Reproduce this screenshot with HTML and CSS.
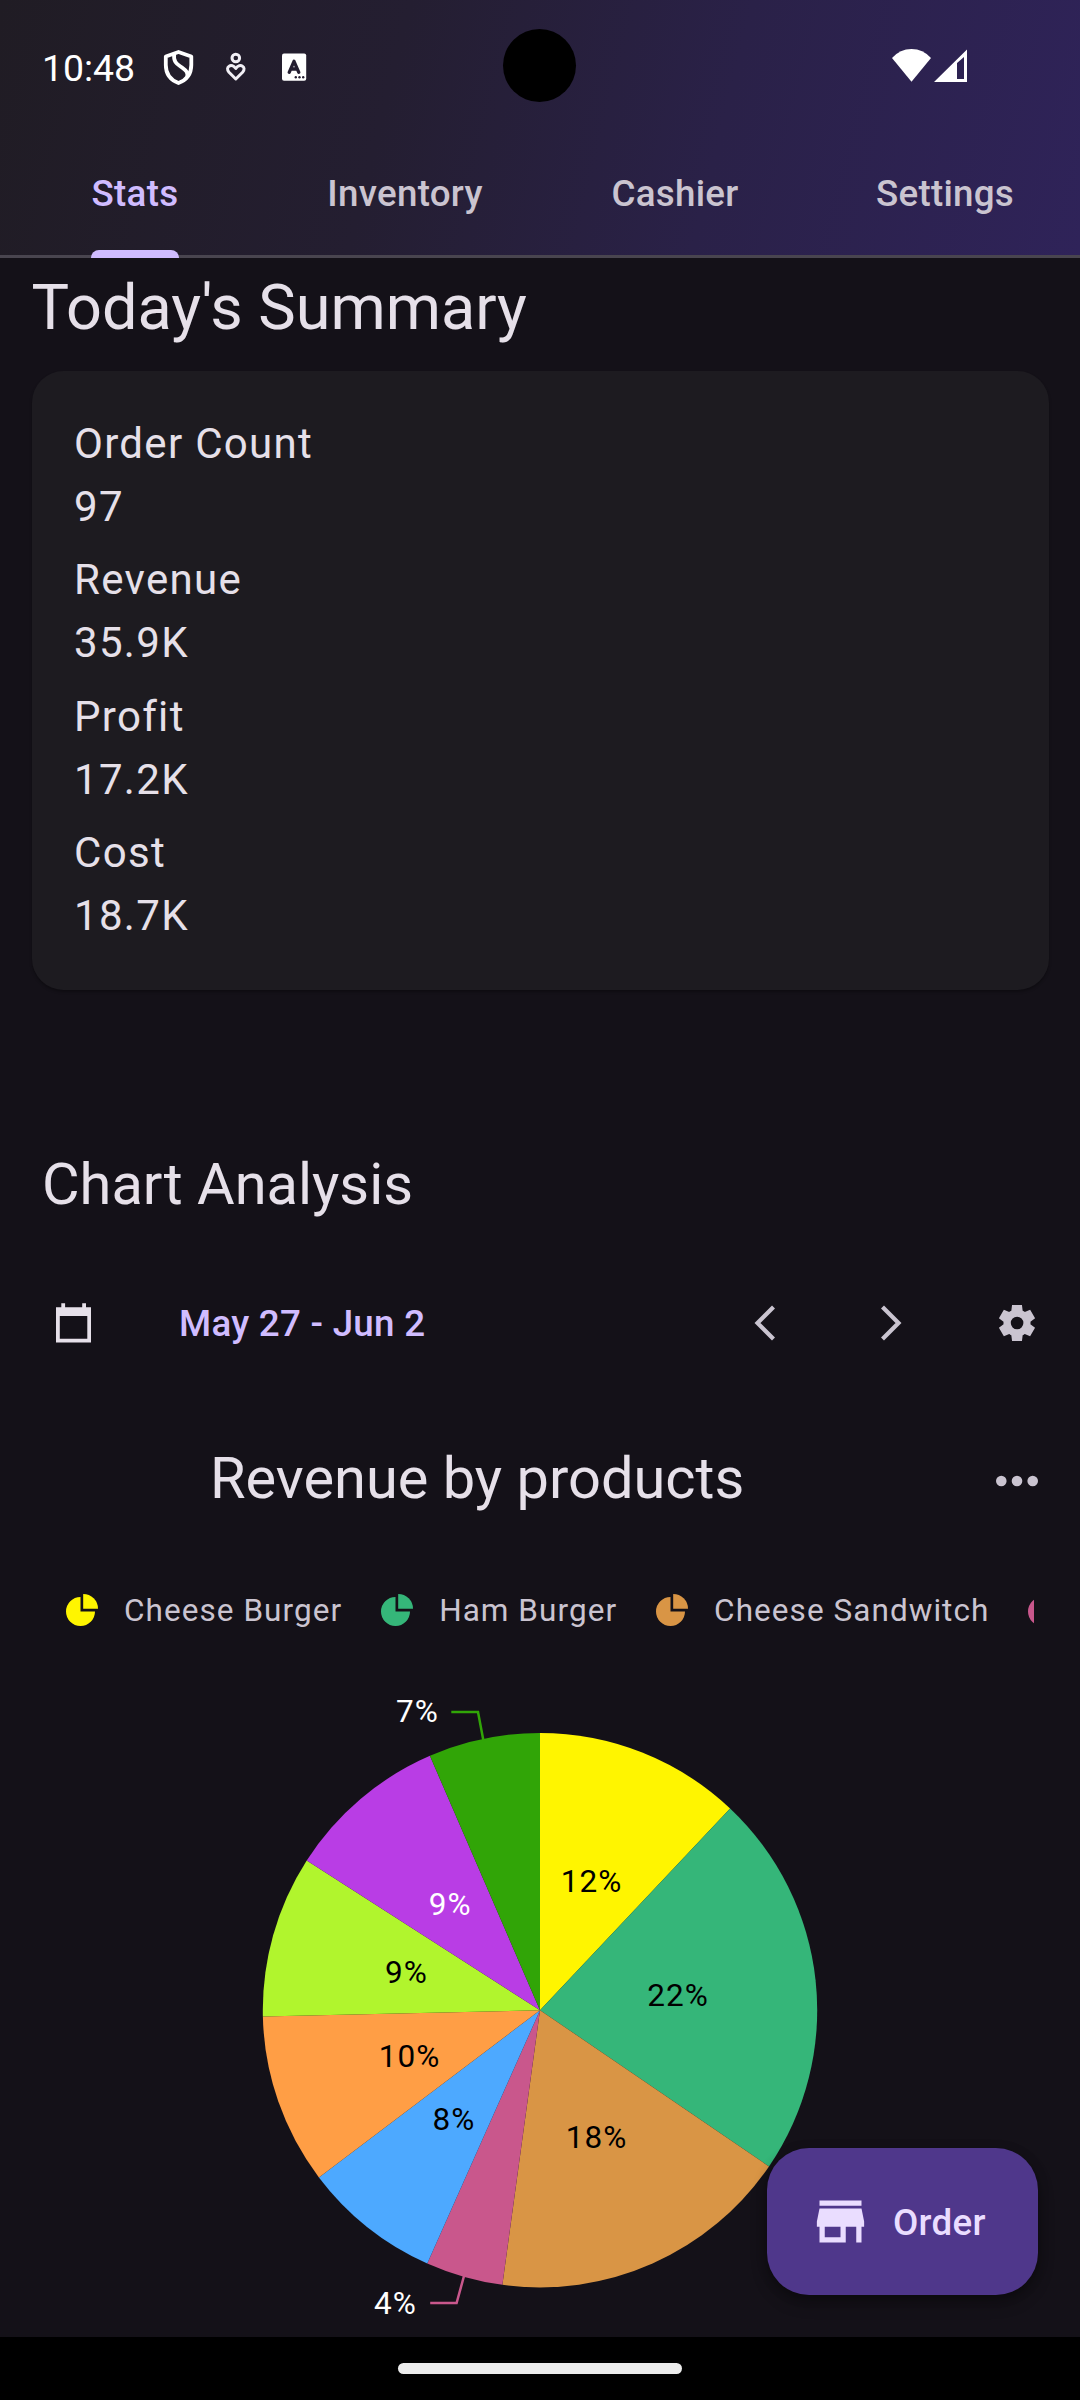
FILE: index.html
```html
<!DOCTYPE html>
<html lang="en">
<head>
<meta charset="utf-8">
<title>Stats</title>
<link rel="stylesheet" href="styles.css">
</head>
<body>
<div class="screen">
  <header class="top">
    <div class="status">
      <span class="clock">10:48</span>
      <svg class="status-left" width="160" height="60" viewBox="155 38 160 60">
        <g fill="none" stroke="#fff" stroke-width="3.800" stroke-linejoin="round">
          <path d="M178.500 52L191.300 56.500V65C191.300 73.500 186.500 80 178.500 83C170.500 80 165.800 73.500 165.800 65V56.500Z"/>
          <path d="M174.200 53.500C173 63 178 64.500 182 67.500S188 72 187.300 77"/>
        </g>
        <g fill="none" stroke="#f1eff5" stroke-width="3" stroke-linejoin="round">
          <circle cx="235.800" cy="58" r="3.800"/>
          <path d="M235.800 79L229 72.300C224.500 67 231.500 62.500 235.800 68.500C240.100 62.500 247.100 67 242.600 72.300Z"/>
        </g>
        <rect x="282" y="53.500" width="24.200" height="27.200" rx="2" fill="#fff"/>
        <path d="M289.200 72.300L294 61.300L298.800 72.300M291 69H297" fill="none" stroke="#241e31" stroke-width="3.300" stroke-linecap="round" stroke-linejoin="round"/>
        <g fill="#241e31"><circle cx="295.800" cy="77.300" r="1.200"/><circle cx="299.500" cy="77.300" r="1.200"/><circle cx="303.200" cy="77.300" r="1.200"/></g>
      </svg>
      <svg class="status-right" width="80" height="40" viewBox="890 45 80 40">
        <path fill="#fff" d="M892 58Q900 49 911.500 49T931 58L911.500 81.700Z"/>
        <path fill="#fff" fill-rule="evenodd" d="M934 82L967 49.500V82ZM957 63V79H964V57Z"/>
      </svg>
      <span class="camera"></span>
    </div>
    <nav class="tabs">
      <a class="tab active">Stats</a>
      <a class="tab">Inventory</a>
      <a class="tab">Cashier</a>
      <a class="tab">Settings</a>
    </nav>
  </header>

  <main>
    <h1>Today's Summary</h1>
    <section class="card">
      <div><p>Order Count</p><p>97</p></div>
      <div><p>Revenue</p><p>35.9K</p></div>
      <div><p>Profit</p><p>17.2K</p></div>
      <div><p>Cost</p><p>18.7K</p></div>
    </section>

    <h2>Chart Analysis</h2>
    <div class="range">
      <svg class="calendar" width="35" height="40" viewBox="56 1303 35 40"><path fill="#e6e0e9" fill-rule="evenodd" d="M56 1307.200H61.300V1303.200H65.100V1307.200H82.200V1303.200H86V1307.200H91V1342.400H56ZM59.800 1316V1338.700H87.300V1316Z"/></svg>
      <span class="dates">May 27 - Jun 2</span>
      <svg width="284" height="42" viewBox="754 1302 284 42">
        <path d="M773.500 1307L757.500 1323L773.500 1339M882.500 1307L898.500 1323L882.500 1339" fill="none" stroke="#cac4d0" stroke-width="4.200"/>
        <path transform="translate(995.400 1301.400) scale(1.8)" fill="#cac4d0" fill-rule="evenodd" d="M9.250 22l-.4-3.200q-.325-.125-.612-.3-.288-.175-.563-.375L4.700 19.375l-2.750-4.750 2.575-1.950q-.025-.175-.025-.337v-.675q0-.163.025-.338L1.950 9.375l2.750-4.750 2.975 1.250q.275-.2.575-.375.3-.175.600-.3l.4-3.200h5.500l.4 3.200q.325.125.613.300.287.175.562.375l2.975-1.250 2.750 4.750-2.575 1.950q.025.175.025.338v.674q0 .163-.05.338l2.575 1.950-2.750 4.750-2.950-1.250q-.275.200-.575.375-.3.175-.6.300l-.4 3.200zm2.800-6.500q1.450 0 2.475-1.025Q15.550 13.450 15.550 12q0-1.450-1.025-2.475Q13.500 8.500 12.050 8.500q-1.475 0-2.488 1.025Q8.550 10.550 8.550 12q0 1.450 1.012 2.475Q10.575 15.500 12.050 15.500z"/>
      </svg>
    </div>

    <div class="chart-head">
      <h2>Revenue by products</h2>
      <svg width="42" height="12" viewBox="0 0 42 12" fill="#cac4d0"><circle cx="5.300" cy="6" r="5.300"/><circle cx="21" cy="6" r="5.300"/><circle cx="36.700" cy="6" r="5.300"/></svg>
    </div>

    <svg class="defs" width="0" height="0"><symbol id="pie" viewBox="0 0 32 32"><path d="M14.500 3A14.500 14.500 0 1 0 29 17.500H14.500Z"/><path d="M17.200 0A14.800 14.800 0 0 1 32 14.800H17.200Z"/></symbol></svg>
    <div class="legend">
      <div class="key yellow"><svg><use href="#pie"/></svg><span>Cheese Burger</span></div>
      <div class="key green"><svg><use href="#pie"/></svg><span>Ham Burger</span></div>
      <div class="key tan"><svg><use href="#pie"/></svg><span>Cheese Sandwitch</span></div>
      <div class="key pink"><svg><use href="#pie"/></svg></div>
    </div>

    <svg class="chart" width="1080" height="680" viewBox="0 1657 1080 680">
      <g id="slices"></g>
      <path d="M451.300 1712H478L483.300 1740" fill="none" stroke="#31a507" stroke-width="2.500"/>
      <path d="M430.200 2303H456.600L464 2276" fill="none" stroke="#c9578c" stroke-width="2.500"/>
      <g class="labels">
        <text x="591.500" y="1892">12%</text>
        <text x="678" y="2006">22%</text>
        <text x="596.500" y="2148">18%</text>
        <text x="454" y="2130">8%</text>
        <text x="409.500" y="2067">10%</text>
        <text x="406.500" y="1983">9%</text>
        <text class="light" x="450.200" y="1915">9%</text>
        <text class="light" x="417.500" y="1722">7%</text>
        <text class="light" x="395.500" y="2314">4%</text>
      </g>
    </svg>
  </main>

  <button class="order">
    <svg width="63" height="63" viewBox="0 0 24 24"><path fill="#eaddff" d="M20 4H4v2h16V4zm1 10v-2l-1-5H4l-1 5v2h1v6h10v-6h4v6h2v-6h1zm-9 4H6v-4h6v4z"/></svg>
    <span>Order</span>
  </button>
  <footer><span class="pill"></span></footer>
</div>
<script src="chart.js"></script>
</body>
</html>
```
FILE: styles.css
```css
* { box-sizing: border-box; margin: 0; padding: 0; }
body { width: 1080px; height: 2400px; overflow: hidden; background: #141118; font-family: Roboto, sans-serif; color: #e6e0e9; }
svg { display: block; flex: none; }
.screen { position: relative; display: flex; flex-direction: column; width: 1080px; height: 2400px; }
.top { height: 258px; flex: none; background: linear-gradient(104deg, #201c24 0%, #241e31 36%, #2a2148 66%, #2f2359 100%); border-bottom: 3px solid #49454f; display: flex; flex-direction: column; }
.status { position: relative; flex: none; height: 132px; display: flex; align-items: flex-start; }
.clock { margin: 46px 0 0 42px; width: 113px; font-size: 37.400px; line-height: 45px; color: #fff; }
.status-left { margin-top: 38px; }
.status-right { margin: 45px 0 0 575px; }
.camera { position: absolute; left: 503px; top: 29px; width: 73px; height: 73px; border-radius: 50%; background: #000; }
.tabs { display: grid; grid-template-columns: repeat(4, 1fr); height: 123px; }
.tab { position: relative; display: flex; justify-content: center; padding-top: 36px; font-size: 36.750px; font-weight: 500; letter-spacing: .26px; line-height: 52px; color: #cac4d0; }
.active { color: #d0bcff; }
.active::after { content: ""; position: absolute; left: 91px; top: 118px; width: 88px; height: 8px; border-radius: 8px 8px 0 0; background: #d0bcff; }
main { height: 2079px; display: flex; flex-direction: column; }
h1 { margin: 8px 0 0 31.500px; font-size: 63px; font-weight: 400; line-height: 84px; }
.card { margin: 21px 31.500px 0; height: 619px; padding: 40.500px 42.500px; border-radius: 31.500px; background: #1d1b20; box-shadow: 0 2px 3px rgba(0,0,0,.3); display: flex; flex-direction: column; gap: 10.500px; font-size: 42px; letter-spacing: 1.310px; line-height: 63px; }
h2 { font-size: 57.750px; font-weight: 400; line-height: 74px; }
main > h2 { margin: 156.500px 0 0 42px; }
.range { display: flex; align-items: center; height: 126px; margin: 39.500px 42px 0 56px; }
.dates { flex: 1; padding-left: 88px; font-size: 36.750px; font-weight: 500; letter-spacing: .26px; color: #d0bcff; }
.chart-head { display: flex; justify-content: space-between; align-items: center; height: 74px; margin: 57.500px 42px 0 210px; }
.chart-head h2 { margin-bottom: 5px; }
.defs { position: absolute; }
.legend { display: flex; align-items: center; height: 48px; margin: 68.500px 46.500px 0 66px; overflow: hidden; font-size: 31.500px; letter-spacing: 1.050px; line-height: 46px; color: #cac4d0; white-space: nowrap; }
.key { display: flex; align-items: center; flex: none; margin-right: 39px; }
.key span { padding-top: 2px; }
.key svg { width: 32px; height: 32px; margin-right: 26px; }
.yellow svg { fill: #fff500; } .green svg { fill: #35b679; } .tan svg { fill: #d99545; } .pink svg { fill: #c9578c; }
.chart { margin-top: 23px; }
.labels { font-size: 31.500px; letter-spacing: 1.050px; text-anchor: middle; fill: #000; }
.labels .light { fill: #fff; }
.order { position: absolute; left: 767px; top: 2148px; width: 271px; height: 147px; border: 0; border-radius: 42px; background: #4f378b; box-shadow: 0 8px 16px rgba(0,0,0,.3), 0 2px 12px rgba(0,0,0,.2); display: flex; align-items: center; padding-left: 42px; gap: 21px; font: 500 36.750px/52px Roboto, sans-serif; letter-spacing: .26px; color: #eaddff; }
.order span { padding-top: 2px; }
footer { height: 63px; flex: none; background: #000; display: flex; justify-content: center; align-items: center; }
.pill { width: 284px; height: 10.500px; border-radius: 6px; background: #ececec; }
```
FILE: chart.js
```javascript
// Each slice: start angle, end angle (clockwise from the top), colour.
const slices = [
  [0, 43.3, '#fff500'],
  [43.3, 124.3, '#35b679'],
  [124.3, 187.8, '#d99545'],
  [187.8, 204, '#c9578c'],
  [204, 232.9, '#4da9ff'],
  [232.9, 268.7, '#ff9e45'],
  [268.7, 302.7, '#b1f52d'],
  [302.7, 336.6, '#b93de5'],
  [336.6, 360, '#31a507'],
];
const cx = 540, cy = 2010.2, r = 277.2;
const point = (deg) => {
  const a = deg * Math.PI / 180;
  return `${(cx + r * Math.sin(a)).toFixed(2)} ${(cy - r * Math.cos(a)).toFixed(2)}`;
};
const group = document.getElementById('slices');
for (const [from, to, color] of slices) {
  const path = document.createElementNS('http://www.w3.org/2000/svg', 'path');
  path.setAttribute('d', `M${cx} ${cy}L${point(from)}A${r} ${r} 0 0 1 ${point(to)}Z`);
  path.setAttribute('fill', color);
  group.appendChild(path);
}
```
